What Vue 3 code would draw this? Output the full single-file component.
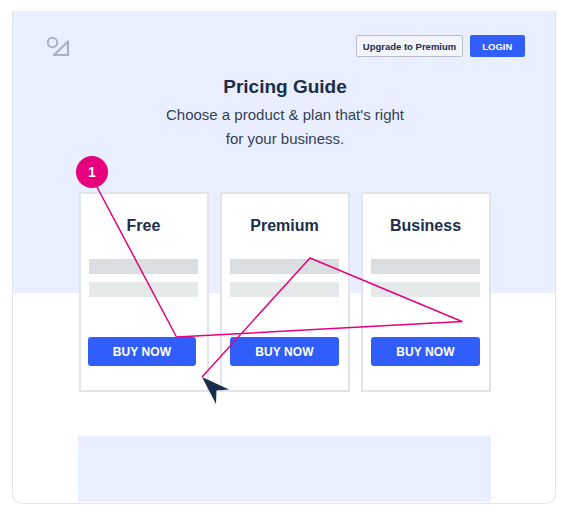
<script setup>
const plans = ['Free', 'Premium', 'Business'];
</script>

<template>
    <div class="page">
        <div class="frame">
            <div class="hero">
                <div class="topbar">
                    <svg class="logo" width="24" height="22" viewBox="0 0 24 22" fill="none">
                        <circle cx="6.500" cy="7.500" r="4.700" stroke="#a9b1c1" stroke-width="2" />
                        <path d="M22 6.500V20H8Z" stroke="#a9b1c1" stroke-width="2.200" stroke-linejoin="round" />
                    </svg>
                    <div class="actions">
                        <button class="btn-upgrade">Upgrade to Premium</button>
                        <button class="btn-login">LOGIN</button>
                    </div>
                </div>
                <h1 class="title">Pricing Guide</h1>
                <p class="subtitle">Choose a product &amp; plan that's right<br>for your business.</p>
            </div>

            <div class="cards">
                <div v-for="plan in plans" :key="plan" class="card">
                    <div class="card-title">{{ plan }}</div>
                    <div class="bar bar-dark"></div>
                    <div class="bar bar-light"></div>
                    <button class="btn-buy">BUY NOW</button>
                </div>
            </div>

            <div class="footer-block"></div>
        </div>

        <svg class="overlay" width="568" height="516" viewBox="0 0 568 516" fill="none">
            <path d="M97 187L176.500 337L462 321.500L310 258L202 377" stroke="#e6007e" stroke-width="1.500" stroke-linejoin="round" />
            <path d="M202 377L229 389.500L216.500 390.500L216 404Z" fill="#1b2d4b" />
        </svg>
        <div class="badge">1</div>
    </div>
</template>

<style>
html, body {
    margin: 0;
    background: #fff;
}
</style>

<style scoped>
.page {
    position: relative;
    width: 568px;
    height: 516px;
    padding: 11px 12px 0;
    box-sizing: border-box;
    overflow: hidden;
    font-family: 'Liberation Sans', Arial, sans-serif;
    color: #1b2d4b;
}
.frame {
    height: 493px;
    box-sizing: border-box;
    border: 1px solid #e2e4e8;
    border-top: none;
    border-radius: 0 0 10px 10px;
    display: flex;
    flex-direction: column;
    overflow: hidden;
}
.hero {
    height: 282px;
    flex: none;
    margin: 0 -1px;
    background: #e9effe;
    text-align: center;
    box-sizing: border-box;
    padding: 24px 31px 0 33px;
}
.topbar {
    display: flex;
    justify-content: space-between;
    align-items: flex-start;
}
.logo {
    margin-left: 1px;
}
.actions {
    display: flex;
    gap: 6.500px;
}
button {
    font-family: inherit;
    padding: 0;
    cursor: pointer;
}
.btn-upgrade {
    width: 107px;
    height: 22px;
    border: 1px solid #b9bdc6;
    border-radius: 2px;
    background: #f2f5fe;
    color: #1b2d4b;
    font-size: 9.500px;
    font-weight: 700;
}
.btn-login {
    width: 55.500px;
    height: 22px;
    border: none;
    border-radius: 2px;
    background: #315efb;
    color: #fff;
    font-size: 9.500px;
    font-weight: 700;
}
.title {
    margin: 18px 0 0;
    font-size: 19px;
    line-height: 24px;
    font-weight: 700;
}
.subtitle {
    margin: 4px 0 0;
    font-size: 15px;
    line-height: 23.500px;
    color: #333f55;
}
.cards {
    display: flex;
    gap: 11px;
    margin: -101px 0 0 65.500px;
    position: relative;
}
.card {
    width: 130px;
    height: 199.500px;
    box-sizing: border-box;
    border: 2px solid #e1e4e9;
    background: #fff;
    padding: 0 8.500px;
    display: flex;
    flex-direction: column;
}
.card-title {
    margin-top: 22px;
    height: 20px;
    line-height: 20px;
    text-align: center;
    font-size: 16px;
    font-weight: 700;
}
.bar {
    height: 15px;
    width: 109px;
}
.bar-dark {
    margin-top: 23px;
    background: #dadee1;
}
.bar-light {
    margin-top: 8px;
    background: #e6e9ea;
}
.btn-buy {
    margin-top: 40px;
    width: 109px;
    height: 29px;
    border: none;
    border-radius: 3px;
    background: #315efb;
    color: #fff;
    font-size: 12px;
    font-weight: 700;
    letter-spacing: 0.100px;
}
.card:first-child .btn-buy {
    margin-left: -1px;
    width: 108px;
}
.footer-block {
    margin: 44.500px 0 0 65px;
    width: 413px;
    height: 66px;
    background: #e9effe;
}
.overlay {
    position: absolute;
    left: 0;
    top: 0;
}
.badge {
    position: absolute;
    left: 76px;
    top: 156px;
    width: 32px;
    height: 32px;
    border-radius: 50%;
    background: #e6007e;
    color: #fff;
    font-size: 14px;
    font-weight: 700;
    line-height: 32px;
    text-align: center;
}
</style>
